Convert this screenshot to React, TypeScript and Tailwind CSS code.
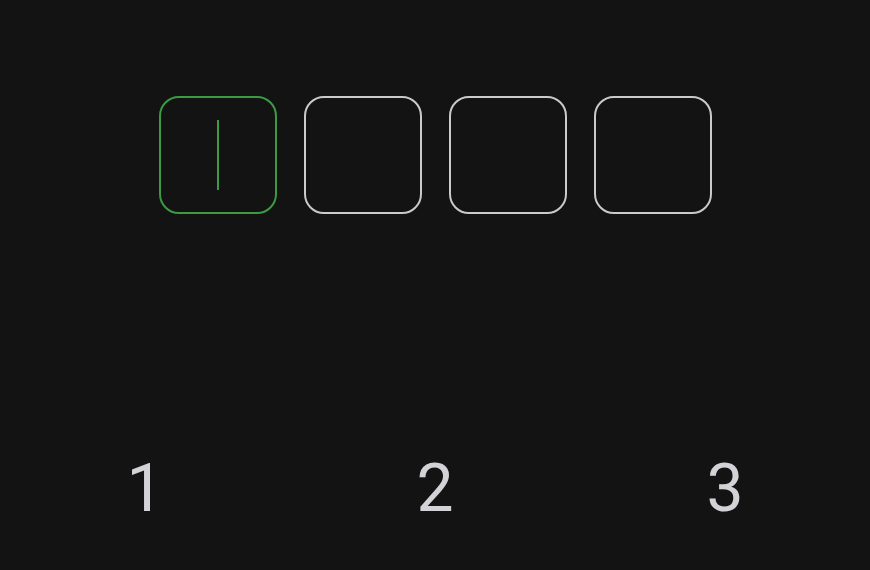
export default function App() {
  const slots = [0, 1, 2, 3];
  const keys = ["1", "2", "3"];
  return (
    <div
      className="w-[870px] h-[570px] bg-[#131313] flex flex-col items-center overflow-hidden"
      style={{ fontFamily: "Roboto, 'Noto Sans', sans-serif" }}
    >
      {/* code entry slots */}
      <div className="mt-[96px] flex gap-[27px] pl-[1px]">
        {slots.map((i) => (
          <div
            key={i}
            className={
              i === 0
                ? "w-[118px] h-[118px] rounded-[20px] border-2 border-[#3b9a42] flex items-center justify-center"
                : "w-[118px] h-[118px] rounded-[20px] border-2 border-[#c9c9ce]"
            }
          >
            {i === 0 && <div className="w-[2px] h-[70px] bg-[#3b9a42]" />}
          </div>
        ))}
      </div>

      {/* keypad top row */}
      <div className="mt-[242px] w-full grid grid-cols-3">
        {keys.map((k) => (
          <div
            key={k}
            className="flex justify-center text-[66px] leading-none font-normal text-[#d2d2d7]"
          >
            {k}
          </div>
        ))}
      </div>
    </div>
  );
}
